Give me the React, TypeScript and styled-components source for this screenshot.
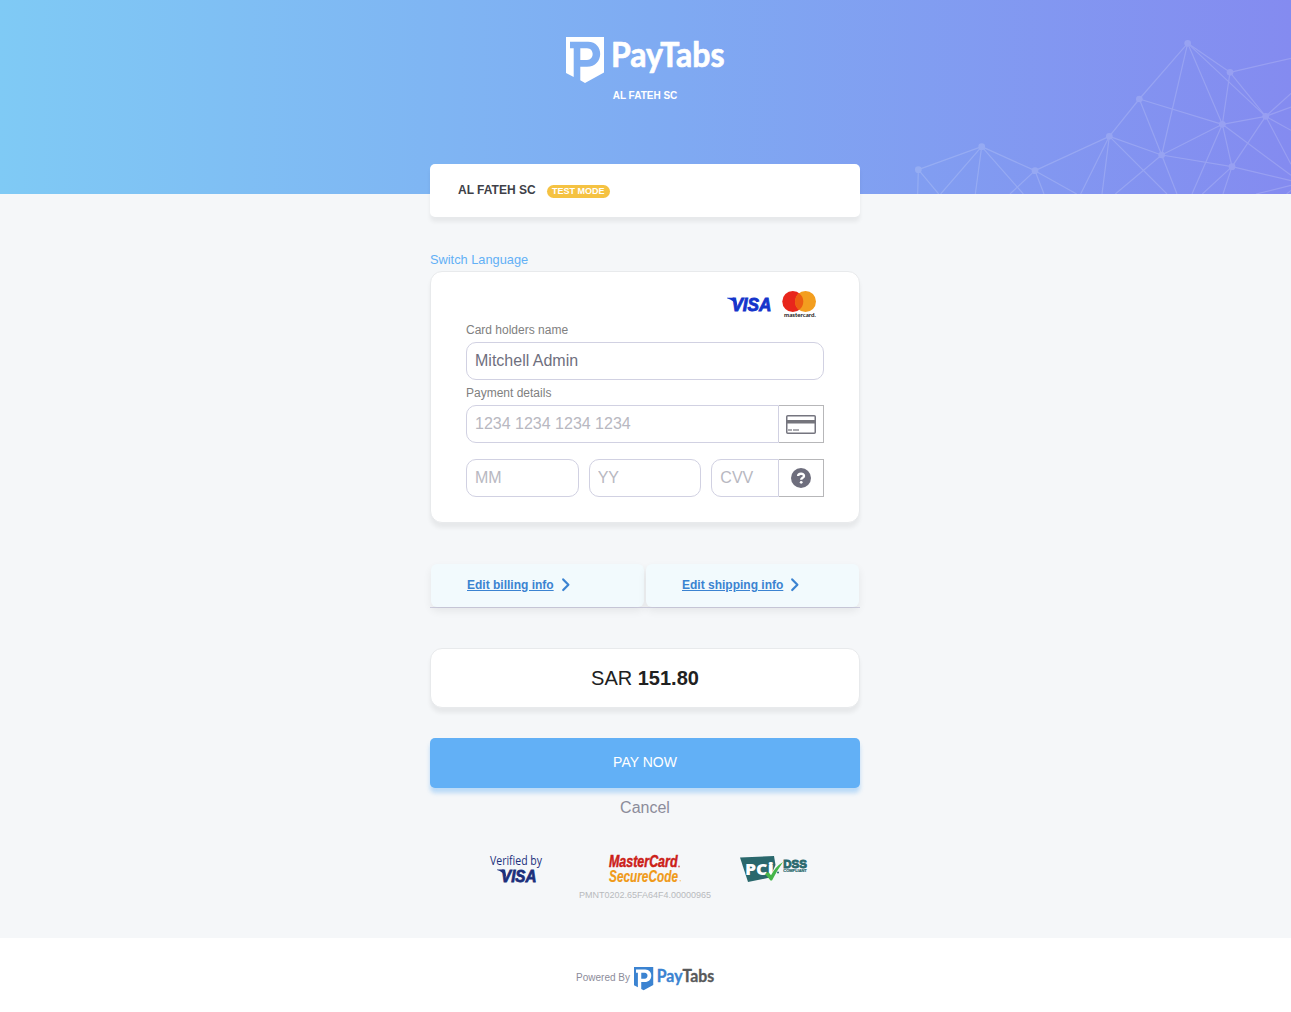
import React from "react";
import styled, { createGlobalStyle } from "styled-components";

const GlobalStyle = createGlobalStyle`
  *, *::before, *::after { box-sizing: border-box; }
  body {
    margin: 0;
    background: #fff;
    font-family: "Liberation Sans", Arial, sans-serif;
    color: #212529;
  }
  svg { display: block; flex: none; overflow: visible; }
`;

const Page = styled.div`
  display: flex;
  flex-direction: column;
  height: 1012px;
  overflow: hidden;
`;

const Hero = styled.header`
  position: relative;
  flex: none;
  height: 194px;
  padding: 37px 1px 0 0;
  display: flex;
  flex-direction: column;
  align-items: center;
  background: linear-gradient(90deg, #7fcaf5 0%, #7faaf2 52%, #848bf0 100%);
`;

const HeroName = styled.div`
  margin-top: 6px;
  font-size: 10px;
  line-height: 13px;
  font-weight: 700;
  color: #fff;
`;

const NetworkArt = styled.svg`
  position: absolute;
  right: 0;
  bottom: 0;
  width: 391px;
  height: 164px;
  overflow: hidden;
`;

const Main = styled.main`
  flex: none;
  height: 744px;
  background: #f5f7f9;
  display: flex;
  flex-direction: column;
  align-items: center;
`;

const Column = styled.div`
  width: 430px;
  margin: -30px 1px 0 0;
  display: flex;
  flex-direction: column;
  position: relative;
`;

const MerchantCard = styled.section`
  height: 53px;
  padding: 0 28px;
  display: flex;
  align-items: center;
  background: #fff;
  border-radius: 5px;
  box-shadow: 0 5px 4px rgba(0, 0, 0, 0.06);
`;

const MerchantName = styled.div`
  font-size: 12px;
  line-height: 16px;
  margin-top: -2px;
  font-weight: 700;
  color: #3e3f48;
`;

const ModeBadge = styled.span`
  margin: 2px 0 0 11px;
  height: 13px;
  padding: 0 5.5px;
  border-radius: 7px;
  background: #f5c242;
  color: #fff;
  font-size: 9px;
  line-height: 13px;
  font-weight: 700;
`;

const LanguageLink = styled.a`
  align-self: flex-start;
  margin-top: 34px;
  font-size: 12.8px;
  line-height: 17px;
  color: #62b0f6;
`;

const Panel = styled.section`
  background: #fff;
  border: 1px solid #e8eaec;
  border-radius: 12px;
  box-shadow: 0 5px 4px rgba(0, 0, 0, 0.06);
`;

const PaymentPanel = styled(Panel)`
  margin-top: 3px;
  height: 252px;
  padding: 19px 35px 0;
  display: flex;
  flex-direction: column;
`;

const Brands = styled.div`
  display: flex;
  justify-content: flex-end;
  gap: 10px;
  height: 30px;
  padding-right: 7px;
`;

const BrandSlot = styled.span`
  padding-top: 5.5px;
`;

const Label = styled.label`
  font-size: 12px;
  line-height: 16px;
  height: 21px;
  padding-top: 1px;
  color: #808080;
`;

const InputGroup = styled.div<{ $gap?: number }>`
  display: flex;
  margin-bottom: ${(p) => p.$gap ?? 0}px;
`;

const Input = styled.input<{ $joined?: boolean }>`
  flex: 1;
  min-width: 0;
  width: 100%;
  height: 38px;
  padding: 0 8px;
  border: 1px solid #d1d1e2;
  border-radius: ${(p) => (p.$joined ? "10px 0 0 10px" : "10px")};
  background: #fff;
  font: 16px "Liberation Sans", Arial, sans-serif;
  color: #6f6f7e;
  outline: none;
  &::placeholder { color: #b8b8c1; opacity: 1; }
`;

const Addon = styled.span`
  flex: none;
  width: 45px;
  height: 38px;
  border: 1px solid #b7b7b9;
  border-left: 0;
  display: flex;
  align-items: center;
  justify-content: center;
`;

const ExpiryRow = styled.div`
  display: grid;
  grid-template-columns: repeat(3, 1fr);
  gap: 10px;
`;

const Tabs = styled.nav`
  margin-top: 41px;
  height: 44px;
  display: grid;
  grid-template-columns: 1fr 1fr;
  gap: 2px;
  padding: 0 1px;
  border-bottom: 1px solid #d1d1e2;
`;

const Tab = styled.a`
  display: flex;
  align-items: center;
  gap: 8px;
  padding: 0 36px 2px;
  border-radius: 6px;
  background: #f2fafd;
  box-shadow: 0 4px 8px rgba(0, 0, 0, 0.07);
  font-size: 12px;
  font-weight: 700;
  color: #3b83d1;
`;

const TabText = styled.span`
  text-decoration: underline;
`;

const AmountPanel = styled(Panel)`
  margin-top: 40px;
  height: 60px;
  display: flex;
  align-items: center;
  justify-content: center;
  font-size: 20px;
  line-height: 24px;
  color: #212121;
  white-space: pre;
`;

const PayButton = styled.button`
  margin-top: 30px;
  height: 50px;
  padding: 0 0 2px;
  border: 0;
  border-radius: 5px;
  background: #62b0f6;
  box-shadow: 0 5px 4px rgba(98, 176, 246, 0.4);
  color: #fff;
  font: 14px "Liberation Sans", Arial, sans-serif;
`;

const CancelLink = styled.a`
  margin-top: 10px;
  text-align: center;
  font-size: 16px;
  line-height: 20px;
  color: #8c8c9a;
`;

const SealRow = styled.div`
  margin-top: 37px;
  padding: 0 52px 0 59px;
  height: 28px;
  display: flex;
`;

const Seal = styled.div<{ $before?: number }>`
  margin-left: ${(p) => p.$before ?? 0}px;
`;

const Reference = styled.div`
  margin-top: 6px;
  text-align: center;
  font-size: 9px;
  line-height: 12px;
  color: #b8babd;
`;

const Footer = styled.footer`
  flex: 1;
  background: #fff;
  display: flex;
  align-items: flex-start;
  justify-content: center;
  gap: 4px;
  padding: 29px 1px 0 0;
`;

const FooterText = styled.span`
  font-size: 10px;
  line-height: 21px;
  color: #8c8c9a;
`;

const LogoText = styled.text<{ $family?: string; $weight?: number; $italic?: boolean }>`
  font-family: ${(p) => p.$family ?? '"Liberation Sans"'}, Arial, sans-serif;
  font-weight: ${(p) => p.$weight ?? 700};
  font-style: ${(p) => (p.$italic ? "italic" : "normal")};
`;

function PayTabsLogo({ width, height, mark, pay, tabs }: {
  width: number; height: number; mark: string; pay: string; tabs: string;
}) {
  return (
    <svg width={width} height={height} viewBox="0 0 158 46" aria-label="PayTabs">
      <path fill={mark} d="M0 0H38V35.5L19 46L14.3 43.3V29.7H21C38.500 29.700 38.500 4.700 22 4.700H4V11.300H7.700V40L0 36Z" />
      <path fill={mark} d="M14.300 11.300H21C28.500 11.300 28.500 23 21 23H14.300Z" />
      <LogoText $family="Lato" x="45" y="30.300" fontSize="33.500" fill={pay} stroke={pay} strokeWidth=".7" strokeLinejoin="round" textLength="113.500" lengthAdjust="spacingAndGlyphs">
        Pay<tspan fill={tabs} stroke={tabs}>Tabs</tspan>
      </LogoText>
    </svg>
  );
}

function VisaLogo({ width, height, color }: { width: number; height: number; color: string }) {
  return (
    <svg width={width} height={height} viewBox="0 0 44 14" preserveAspectRatio="none" aria-label="Visa">
      <path fill={color} d="M0 .7H6.500Q8.300 .8 8.700 2.300L10.500 10Q6.500 2.900 0 1.300Z" />
      <LogoText x="4.300" y="13.600" fontSize="18.500" $italic fill={color} stroke={color} strokeWidth=".9" textLength="39.200" lengthAdjust="spacingAndGlyphs">VISA</LogoText>
    </svg>
  );
}

const nodes: [number, number][] = [
  [55, 419], [245, 350], [405, 422], [628, 319], [718, 207], [863, 40],
  [990, 127], [967, 283], [1097, 259], [785, 375], [996, 410],
];

const links: [number, number, number, number][] = [
  [55, 419, 245, 350], [245, 350, 405, 422], [405, 422, 628, 319], [628, 319, 718, 207],
  [718, 207, 863, 40], [863, 40, 990, 127], [863, 40, 1097, 259], [863, 40, 967, 283],
  [863, 40, 785, 375], [990, 127, 1173, 85], [990, 127, 1097, 259], [990, 127, 967, 283],
  [718, 207, 967, 283], [718, 207, 785, 375], [967, 283, 1097, 259], [967, 283, 785, 375],
  [967, 283, 996, 410], [967, 283, 876, 492], [967, 283, 1173, 436], [1097, 259, 1173, 190],
  [1097, 259, 1173, 231], [1097, 259, 1173, 301], [1097, 259, 996, 410], [1097, 259, 1173, 403],
  [628, 319, 785, 375], [785, 375, 996, 410], [785, 375, 646, 492], [785, 375, 831, 492],
  [996, 410, 1173, 452], [996, 410, 907, 492], [996, 410, 969, 492], [628, 319, 542, 492],
  [628, 319, 606, 492], [628, 319, 801, 492], [405, 422, 330, 492], [405, 422, 432, 492],
  [405, 422, 530, 492], [245, 350, 122, 492], [245, 350, 226, 492], [245, 350, 370, 492],
  [55, 419, 53, 492], [55, 419, 116, 492], [1068, 492, 1173, 466], [1160, 492, 1173, 481],
];

function Network() {
  return (
    <NetworkArt viewBox="0 0 1173 492">
      <g opacity=".16" stroke="#fff" strokeWidth="3.600">
        {links.map(([x1, y1, x2, y2], i) => <line key={i} x1={x1} y1={y1} x2={x2} y2={y2} />)}
        {nodes.map(([cx, cy], i) => <circle key={i} cx={cx} cy={cy} r="10" fill="#fff" stroke="none" />)}
      </g>
    </NetworkArt>
  );
}

function MastercardLogo() {
  return (
    <svg width="35" height="28" viewBox="0 0 35 28" aria-label="Mastercard">
      <circle cx="10.800" cy="10.500" r="10.500" fill="#e8261c" />
      <circle cx="23.500" cy="10.500" r="10.500" fill="#f39e1f" />
      <path fill="#ec5e12" d="M17.150 2.140a10.500 10.500 0 0 1 0 16.720a10.500 10.500 0 0 1 0-16.720Z" />
      <LogoText $family="Lato" x="2" y="26" fontSize="6" fill="#151515" textLength="32" lengthAdjust="spacingAndGlyphs">mastercard.</LogoText>
    </svg>
  );
}

function CardIcon() {
  return (
    <svg width="30" height="19" viewBox="0 0 30 19">
      <rect x=".75" y=".75" width="28.500" height="17.500" rx="1" fill="#fff" stroke="#75757f" strokeWidth="1.500" />
      <rect x="1" y="5" width="28" height="3.500" fill="#75757c" />
      <path d="M2 15H6M7 15H13" stroke="#909097" strokeWidth="1.500" />
    </svg>
  );
}

function HelpIcon() {
  return (
    <svg width="20" height="20" viewBox="0 0 20 20">
      <circle cx="10" cy="10" r="10" fill="#6e6e7d" />
      <path d="M7.100 8C7.200 5 13 4.900 13 7.900C13 9.900 10.200 9.700 10.200 11.800" fill="none" stroke="#fff" strokeWidth="2.400" />
      <circle cx="10.200" cy="14.300" r="1.400" fill="#fff" />
    </svg>
  );
}

function Chevron() {
  return (
    <svg width="8" height="14" viewBox="0 0 8 14">
      <path d="M1.200 1.400L6.400 6.700L1.200 12" fill="none" stroke="#3b83d1" strokeWidth="2.200" strokeLinecap="round" strokeLinejoin="round" />
    </svg>
  );
}

function VerifiedByVisa() {
  return (
    <svg width="53" height="28" viewBox="0 0 53 28" aria-label="Verified by Visa">
      <LogoText $family='"Open Sans"' x="1" y="10" fontSize="12" $weight={400} fill="#1b2f7b" textLength="52" lengthAdjust="spacingAndGlyphs">Verified by</LogoText>
      <path fill="#1b2f7b" d="M8 14.400H14Q15.600 14.500 16 16L17.400 22.500Q14 16.500 8 15Z" />
      <LogoText x="12" y="26.500" fontSize="16.800" $italic fill="#1b2f7b" stroke="#1b2f7b" strokeWidth=".8" textLength="35.500" lengthAdjust="spacingAndGlyphs">VISA</LogoText>
    </svg>
  );
}

function SecureCode() {
  return (
    <svg width="73" height="28" viewBox="0 0 73 28" aria-label="MasterCard SecureCode">
      <LogoText x="0" y="12.300" fontSize="16.500" $italic fill="#cc2018" stroke="#cc2018" strokeWidth=".5" textLength="68.500" lengthAdjust="spacingAndGlyphs">MasterCard</LogoText>
      <circle cx="70" cy="11.500" r="1" fill="#df6c65" />
      <LogoText x="0" y="26.500" fontSize="16.500" $italic fill="#f09a18" stroke="#f09a18" strokeWidth=".2" textLength="69" lengthAdjust="spacingAndGlyphs">SecureCode</LogoText>
      <circle cx="71.200" cy="25.700" r=".8" fill="#f5c77f" />
    </svg>
  );
}

function PciSeal() {
  return (
    <svg width="68" height="28" viewBox="0 0 68 28" aria-label="PCI DSS Compliant">
      <path fill="#2a686d" d="M0 2.500L34 1L35.500 10L30 22.500L8 27Z" />
      <LogoText $family='"Open Sans"' $weight={800} x="5" y="19.500" fontSize="15" fill="#fff" textLength="29" lengthAdjust="spacingAndGlyphs">PC<tspan fontSize="17">i</tspan></LogoText>
      <path fill="#45b549" d="M25 19L28.300 17L31 20.300Q35.500 11.500 43 7Q37 15.500 32 25.500H30.500Z" />
      <circle cx="38" cy="17.500" r="1" fill="#2a686d" />
      <LogoText x="43.300" y="12.800" fontSize="11" fill="#2a686d" stroke="#2a686d" strokeWidth=".9" textLength="23.500" lengthAdjust="spacingAndGlyphs">DSS</LogoText>
      <LogoText x="43.300" y="17" fontSize="3.800" fill="#2a686d" stroke="#2a686d" strokeWidth=".2" textLength="23.500" lengthAdjust="spacingAndGlyphs">COMPLIANT</LogoText>
    </svg>
  );
}

export default function App() {
  return (
    <Page>
      <GlobalStyle />
      <Hero>
        <Network />
        <PayTabsLogo width={158} height={46} mark="#fff" pay="#fff" tabs="#fff" />
        <HeroName>AL FATEH SC</HeroName>
      </Hero>
      <Main>
        <Column>
          <MerchantCard>
            <MerchantName>AL FATEH SC</MerchantName>
            <ModeBadge>TEST MODE</ModeBadge>
          </MerchantCard>
          <LanguageLink>Switch Language</LanguageLink>
          <PaymentPanel>
            <Brands>
              <BrandSlot><VisaLogo width={45} height={14} color="#1535cb" /></BrandSlot>
              <MastercardLogo />
            </Brands>
            <Label htmlFor="holder">Card holders name</Label>
            <InputGroup $gap={4}><Input id="holder" defaultValue="Mitchell Admin" /></InputGroup>
            <Label htmlFor="number">Payment details</Label>
            <InputGroup $gap={16}>
              <Input id="number" $joined placeholder="1234 1234 1234 1234" />
              <Addon><CardIcon /></Addon>
            </InputGroup>
            <ExpiryRow>
              <Input placeholder="MM" />
              <Input placeholder="YY" />
              <InputGroup>
                <Input $joined placeholder="CVV" />
                <Addon><HelpIcon /></Addon>
              </InputGroup>
            </ExpiryRow>
          </PaymentPanel>
          <Tabs>
            <Tab><TabText>Edit billing info</TabText><Chevron /></Tab>
            <Tab><TabText>Edit shipping info</TabText><Chevron /></Tab>
          </Tabs>
          <AmountPanel>SAR <strong>151.80</strong></AmountPanel>
          <PayButton>PAY NOW</PayButton>
          <CancelLink>Cancel</CancelLink>
          <SealRow>
            <Seal><VerifiedByVisa /></Seal>
            <Seal $before={67}><SecureCode /></Seal>
            <Seal $before={58}><PciSeal /></Seal>
          </SealRow>
          <Reference>PMNT0202.65FA64F4.00000965</Reference>
        </Column>
      </Main>
      <Footer>
        <FooterText>Powered By</FooterText>
        <PayTabsLogo width={80} height={23.300} mark="#3b83d1" pay="#3b83d1" tabs="#58595b" />
      </Footer>
    </Page>
  );
}
